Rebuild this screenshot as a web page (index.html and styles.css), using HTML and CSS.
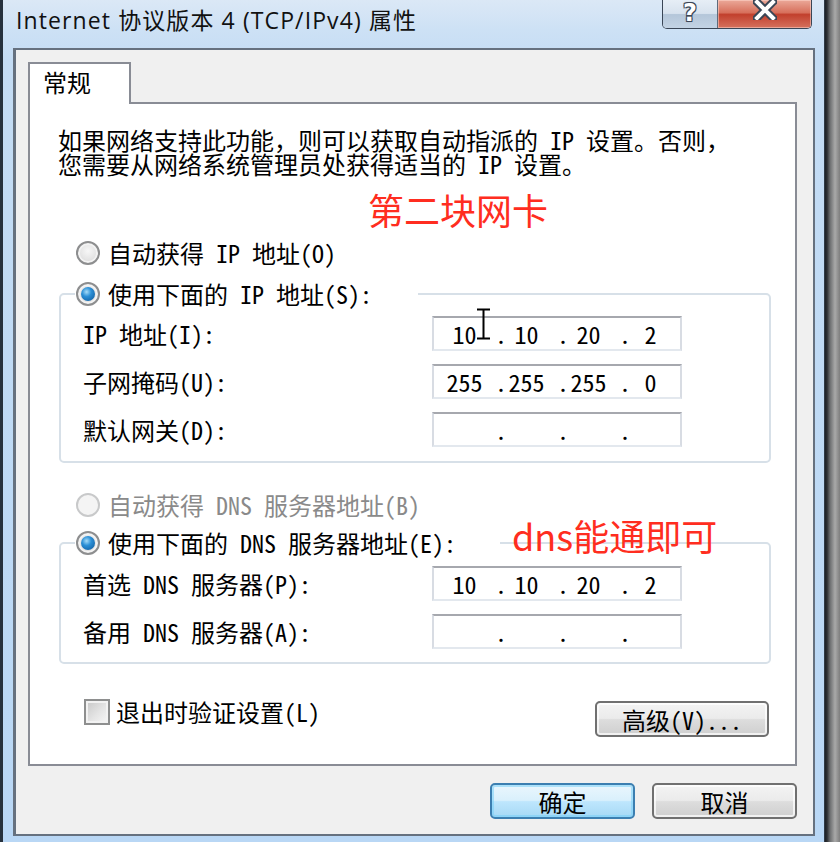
FILE: index.html
```html
<!DOCTYPE html>
<html lang="zh-CN">
<head>
  <meta charset="UTF-8">
  <title>Internet 协议版本 4 (TCP/IPv4) 属性</title>
  <link rel="stylesheet" href="styles.css">
</head>
<body>
  <div class="window">
    <div class="titlebar">
      <div class="title">Internet 协议版本 4 (TCP/IPv4) 属性</div>
      <div class="caption-buttons">
        <div class="cap help">?</div>
        <div class="cap close">
          <svg width="24" height="20" viewBox="0 0 24 20">
            <path d="M4 2 L20 18 M20 2 L4 18" stroke="#3b4656" stroke-width="8" stroke-linecap="square"/>
            <path d="M4 2 L20 18 M20 2 L4 18" stroke="#fff" stroke-width="4" stroke-linecap="square"/>
          </svg>
        </div>
      </div>
    </div>
    <div class="client">
      <div class="tabs"><div class="tab">常规</div></div>
      <div class="tabpage">
        <p class="intro">如果网络支持此功能，则可以获取自动指派的 IP 设置。否则，<br>您需要从网络系统管理员处获得适当的 IP 设置。</p>
        <div class="note">第二块网卡</div>
        <div class="option"><span class="radio"></span>自动获得 IP 地址(O)</div>
        <fieldset class="group ip">
          <legend class="option"><span class="radio checked"></span>使用下面的 IP 地址(S):</legend>
          <div class="field">
            <span class="label">IP 地址(I):</span>
            <div class="ipbox">
              <span class="seg">10</span><span class="dot">.</span><span class="seg">10</span><span class="dot">.</span><span class="seg">20</span><span class="dot">.</span><span class="seg">2</span>
              <svg class="ibeam" width="16" height="32" viewBox="0 0 16 32">
                <path d="M1 1.5 H14 M7.5 1.5 V30.5 M1 30.5 H14" stroke="#000" stroke-width="2" fill="none"/>
              </svg>
            </div>
          </div>
          <div class="field">
            <span class="label">子网掩码(U):</span>
            <div class="ipbox">
              <span class="seg">255</span><span class="dot">.</span><span class="seg">255</span><span class="dot">.</span><span class="seg">255</span><span class="dot">.</span><span class="seg">0</span>
            </div>
          </div>
          <div class="field">
            <span class="label">默认网关(D):</span>
            <div class="ipbox">
              <span class="seg"></span><span class="dot">.</span><span class="seg"></span><span class="dot">.</span><span class="seg"></span><span class="dot">.</span><span class="seg"></span>
            </div>
          </div>
        </fieldset>
        <div class="option disabled"><span class="radio"></span>自动获得 DNS 服务器地址(B)</div>
        <fieldset class="group dns">
          <legend class="option"><span class="radio checked"></span>使用下面的 DNS 服务器地址(E):</legend>
          <div class="field">
            <span class="label">首选 DNS 服务器(P):</span>
            <div class="ipbox">
              <span class="seg">10</span><span class="dot">.</span><span class="seg">10</span><span class="dot">.</span><span class="seg">20</span><span class="dot">.</span><span class="seg">2</span>
            </div>
          </div>
          <div class="field">
            <span class="label">备用 DNS 服务器(A):</span>
            <div class="ipbox">
              <span class="seg"></span><span class="dot">.</span><span class="seg"></span><span class="dot">.</span><span class="seg"></span><span class="dot">.</span><span class="seg"></span>
            </div>
          </div>
        </fieldset>
        <div class="bottom-row">
          <div class="check"><span class="checkbox"></span>退出时验证设置(L)</div>
          <div class="button advanced">高级(V)...</div>
        </div>
        <div class="note note-dns">dns能通即可</div>
      </div>
      <div class="dialog-buttons">
        <div class="button default">确定</div>
        <div class="button">取消</div>
      </div>
    </div>
  </div>
</body>
</html>
```

FILE: styles.css
```css
body {
  margin: 0;
  height: 842px;
  overflow: hidden;
  background: linear-gradient(90deg, #1c2026 825px, #2c2f33 827px, #6c6e70 830px, #a9a9a9 835px, #7e7e7e 840px);
  font-family: "Noto Sans Mono CJK SC", "Noto Sans CJK SC", sans-serif;
  font-size: 24px;
  color: #000;
}
.window {
  box-sizing: border-box;
  width: 825px;
  height: 842px;
  display: flex;
  flex-direction: column;
  padding: 0 9px 6px 10px;
  border-left: 3px solid #26313d;
  border-right: 1px solid #2f3a46;
  background: linear-gradient(180deg, #dbe8f6 0, #cde1f5 30px, #c4dcf4 60px, #b9d7f5 100%);
}
.titlebar {
  height: 48px;
  display: flex;
  align-items: flex-start;
  padding-left: 3px;
  flex: none;
}
.title {
  font-family: "Open Sans", "Noto Sans CJK SC", sans-serif;
  font-size: 23px;
  letter-spacing: 1.1px;
  line-height: 40px;
  color: #111;
  white-space: nowrap;
}
.caption-buttons {
  display: flex;
  margin-left: auto;
  margin-right: 3px;
  border: 1px solid #3a4656;
  border-top: 0;
  border-radius: 0 0 5px 5px;
  overflow: hidden;
}
.cap {
  height: 28px;
  display: flex;
  justify-content: center;
}
.help {
  width: 54px;
  border-right: 1px solid #5d6b7c;
  background: linear-gradient(180deg, #e6eef6 0, #d7e2ee 48%, #b4c6d9 52%, #c3d3e4 100%);
  font-family: "DejaVu Sans", sans-serif;
  font-weight: bold;
  font-size: 24px;
  line-height: 26px;
  color: #fff;
  text-shadow: 1px 1px 0 #3b4656, -1px -1px 0 #3b4656, 1px -1px 0 #3b4656, -1px 1px 0 #3b4656, 0 0 2px #3b4656;
}
.close {
  width: 93px;
  background: linear-gradient(180deg, #eba999 0, #d7705c 45%, #c2402d 52%, #d5715d 100%);
  box-shadow: inset 0 0 0 1px rgba(255, 220, 210, 0.5);
}
.client {
  flex: 1;
  display: flex;
  flex-direction: column;
  background: #f0f0f0;
  border: 2px solid #66717f;
  border-left-width: 3px;
  padding: 12px 16px 15px 12px;
}
.tabs {
  display: flex;
  flex: none;
}
.tab {
  box-sizing: border-box;
  width: 103px;
  height: 42px;
  margin-bottom: -2px;
  padding-left: 13px;
  line-height: 36px;
  background: #fff;
  border: 2px solid #898c95;
  border-bottom: 0;
  position: relative;
  z-index: 1;
}
.tabpage {
  flex: 1;
  position: relative;
  display: flex;
  flex-direction: column;
  background: #fff;
  border: 2px solid #898c95;
  padding: 24px 24px 0 29px;
}
.intro {
  margin: 0 0 0 -1px;
  line-height: 24px;
  white-space: nowrap;
}
.note {
  font-family: "Noto Sans CJK SC", sans-serif;
  font-size: 36px;
  line-height: 36px;
  color: #ff2d20;
  margin: 15px 0 0 309px;
}
.note-dns {
  position: absolute;
  left: 482px;
  top: 413px;
  margin: 0;
}
.option {
  display: flex;
  align-items: center;
  height: 24px;
  line-height: 24px;
  margin: 14px 0 0 17px;
  white-space: nowrap;
}
.option.disabled {
  margin-top: 30px;
  color: #8a8a8a;
}
.radio {
  box-sizing: border-box;
  flex: none;
  width: 24px;
  height: 24px;
  margin-right: 8px;
  position: relative;
  border-radius: 50%;
  border: 2px solid #8d8e8f;
  background: radial-gradient(circle at 50% 40%, #f7f7f7 0, #e4e4e4 55%, #c9c9c9 100%);
  box-shadow: inset 0 0 0 2px #f3f3f3;
}
.disabled .radio {
  border-color: #c8c9ca;
  background: #f4f4f4;
  box-shadow: none;
}
.radio.checked::after {
  content: "";
  position: absolute;
  top: 3px;
  left: 3px;
  width: 14px;
  height: 14px;
  border-radius: 50%;
  background: radial-gradient(circle at 40% 35%, #a6dcf8 0, #2b8fd6 38%, #0c5596 100%);
}
.group {
  margin: 15px 0 0;
  min-width: 0;
  border: 2px solid #d7e0e8;
  border-radius: 5px;
  padding: 8px 0 14px 22px;
}
.group.dns {
  margin-top: 12px;
  padding: 9px 0 13px 22px;
}
.group legend.option {
  margin: 0 0 0 -8px;
  height: 28px;
  line-height: 28px;
  padding: 0 46px 0 1px;
  color: #000;
}
.group.dns legend.option {
  padding-right: 44px;
}
.field {
  display: flex;
  align-items: center;
}
.field + .field {
  margin-top: 13px;
}
.label {
  width: 349px;
  white-space: nowrap;
}
.ipbox {
  box-sizing: border-box;
  position: relative;
  display: flex;
  align-items: center;
  width: 250px;
  height: 35px;
  padding-left: 7px;
  border: 2px solid;
  border-color: #a6a8ae #d8dce3 #e3e8ee #d8dce3;
  line-height: 31px;
}
.seg {
  width: 47px;
  text-align: center;
}
.dot {
  box-sizing: border-box;
  width: 15px;
  padding-left: 7px;
  text-align: center;
}
.ibeam {
  position: absolute;
  left: 42px;
  top: -10px;
}
.bottom-row {
  display: flex;
  align-items: flex-start;
  margin-top: 34px;
}
.check {
  display: flex;
  align-items: center;
  height: 26px;
  line-height: 26px;
  margin-left: 25px;
  margin-top: 1px;
}
.checkbox {
  box-sizing: border-box;
  width: 26px;
  height: 26px;
  margin-right: 6px;
  border: 2px solid #8e8f8f;
  background: linear-gradient(135deg, #c6c6c6 0, #e4e4e4 55%, #f7f7f7 100%);
  box-shadow: inset 0 0 0 2px #f2f2f2;
}
.button {
  box-sizing: border-box;
  width: 145px;
  height: 36px;
  display: flex;
  align-items: center;
  justify-content: center;
  border: 2px solid #707070;
  border-radius: 5px;
  background: linear-gradient(180deg, #f3f3f3 0, #ebebeb 48%, #dddddd 52%, #cfcfcf 100%);
  box-shadow: inset 0 0 0 2px rgba(255, 255, 255, 0.7);
}
.button.advanced {
  width: 174px;
  margin: 3px 2px 0 auto;
}
.button.default {
  border-color: #3c7fb1;
  background: linear-gradient(180deg, #eaf6fd 0, #d9f0fc 48%, #bee6fd 52%, #a7d9f5 100%);
  box-shadow: inset 0 0 0 2px rgba(120, 208, 248, 0.55);
}
.dialog-buttons {
  display: flex;
  justify-content: flex-end;
  gap: 17px;
  margin-top: 17px;
  flex: none;
}
```
